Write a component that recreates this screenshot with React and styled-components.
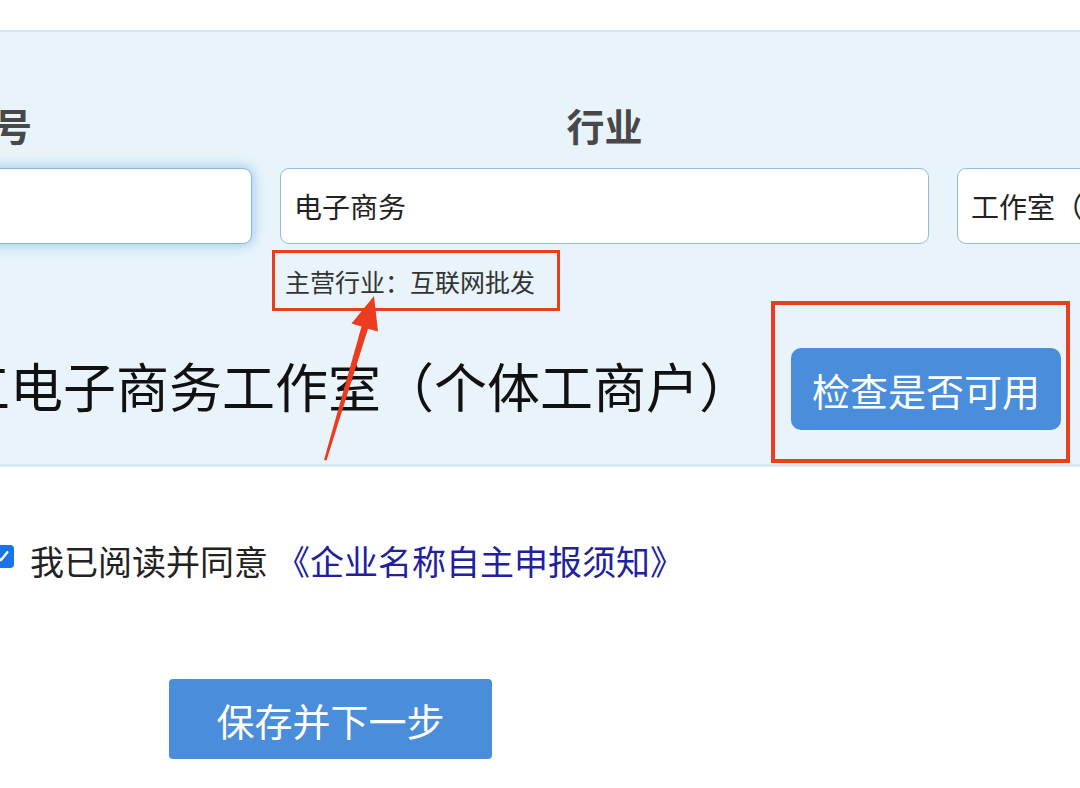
import React from "react";
import styled, { createGlobalStyle } from "styled-components";

const GlobalStyle = createGlobalStyle`
  html, body {
    margin: 0;
    padding: 0;
    background: #fff;
    overflow: hidden;
  }
  body {
    font-family: "Noto Sans CJK SC", "Noto Sans", sans-serif;
  }
`;

function App() {
  return (
    <>
      <GlobalStyle />
      <Page>
        <Panel>
          <FieldsRow>
            <Field $width={592}>
              <Label>企业字号</Label>
              <Input $focused readOnly value="" />
            </Field>
            <Field $width={649}>
              <Label>行业</Label>
              <Input readOnly value="电子商务" />
              <Hint>主营行业：互联网批发</Hint>
            </Field>
            <Field $width={600}>
              <Label>组织形式</Label>
              <Input readOnly value="工作室（个体工商户）" />
            </Field>
          </FieldsRow>
          <NameRow>
            <FullName>杭州星工电子商务工作室（个体工商户）</FullName>
            <Marked>
              <CheckButton>检查是否可用</CheckButton>
            </Marked>
          </NameRow>
        </Panel>

        <AgreeRow>
          <CheckBox>
            <svg width="15" height="15" viewBox="0 0 14 14">
              <path d="M2.5 7.5 L5.5 10.5 L11.5 3" fill="none" stroke="#fff" strokeWidth="2.2" strokeLinecap="round" strokeLinejoin="round" />
            </svg>
          </CheckBox>
          <span>我已阅读并同意</span>
          <NoticeLink href="#">《企业名称自主申报须知》</NoticeLink>
        </AgreeRow>

        <NextButton>保存并下一步</NextButton>

        {/* red annotation arrow pointing at the hint */}
        <Arrow width="1080" height="788" viewBox="0 0 1080 788">
          <polygon
            points="324,460 361.5,326.5 351.5,323.5 374,296 378,331.5 368,328.7 326.5,460.5"
            fill="#ec3b1e"
          />
        </Arrow>
      </Page>
    </>
  );
}

export default App;

const Page = styled.div`
  position: relative;
  width: 1080px;
  height: 788px;
  overflow: hidden;
  padding-top: 30px;
  box-sizing: border-box;
`;

const Panel = styled.section`
  background: #e8f4fa;
  border-top: 2px solid #d0e6f1;
  border-bottom: 3px solid #d3e9f4;
  padding: 68px 0 35px;
  height: 437px;
  box-sizing: border-box;
`;

const FieldsRow = styled.div`
  display: flex;
  gap: 28px;
  margin-left: -340px;
  align-items: flex-start;
`;

const Field = styled.div`
  display: flex;
  flex-direction: column;
  align-items: stretch;
  flex: 0 0 ${(p) => p.$width}px;
  width: ${(p) => p.$width}px;
`;

const Label = styled.div`
  text-align: center;
  font-size: 38px;
  font-weight: 700;
  line-height: 50px;
  color: #484848;
  margin-bottom: 18px;
`;

const Input = styled.input`
  height: 76px;
  box-sizing: border-box;
  border-radius: 9px;
  border: 1.5px solid ${(p) => (p.$focused ? "#88b6d6" : "#93bbd2")};
  background: #fff;
  padding: 0 13px;
  font-family: inherit;
  font-size: 28px;
  color: #222;
  outline: none;
  box-shadow: ${(p) =>
    p.$focused ? "0 0 12px 2px rgba(110, 175, 225, 0.55)" : "none"};
`;

const Hint = styled.div`
  align-self: flex-start;
  margin: 6px 0 0 -8px;
  width: 288px;
  height: 61px;
  box-sizing: border-box;
  border: 3.5px solid #e8401f;
  padding-left: 10px;
  display: flex;
  align-items: center;
  font-size: 25px;
  color: #333;
  white-space: nowrap;
`;

const NameRow = styled.div`
  display: flex;
  align-items: center;
  margin: 37px 0 0 -202px;
  height: 82px;
`;

const FullName = styled.div`
  font-size: 53px;
  line-height: 82px;
  color: #111;
  white-space: nowrap;
  width: 975px;
  flex: 0 0 975px;
  margin-top: -8px;
`;

const Marked = styled.div`
  position: relative;
  margin-left: 18px;

  &::after {
    content: "";
    position: absolute;
    top: -47px;
    left: -20px;
    right: -9px;
    bottom: -33px;
    border: 4.5px solid #e8401f;
    pointer-events: none;
  }
`;

const BlueButton = styled.button`
  background: #4a8edb;
  color: #fff;
  border: none;
  font-family: inherit;
  font-size: 38px;
  cursor: pointer;
  display: flex;
  align-items: center;
  justify-content: center;
`;

const CheckButton = styled(BlueButton)`
  width: 270px;
  height: 82px;
  border-radius: 10px;
`;

const AgreeRow = styled.div`
  display: flex;
  align-items: center;
  gap: 8px;
  margin: 69px 0 0 -9px;
  height: 48px;
  font-size: 34px;
  color: #222;
  white-space: nowrap;
`;

const CheckBox = styled.span`
  width: 23px;
  height: 23px;
  border-radius: 4px;
  background: #1a73e8;
  display: flex;
  align-items: center;
  justify-content: center;
  margin-right: 8px;
  margin-top: -8px;
`;

const NoticeLink = styled.a`
  color: #21219f;
  text-decoration: none;
`;

const NextButton = styled(BlueButton)`
  margin: 95px 0 0 169px;
  width: 323px;
  height: 80px;
  border-radius: 4px;
`;

const Arrow = styled.svg`
  position: absolute;
  top: 0;
  left: 0;
  pointer-events: none;
`;
